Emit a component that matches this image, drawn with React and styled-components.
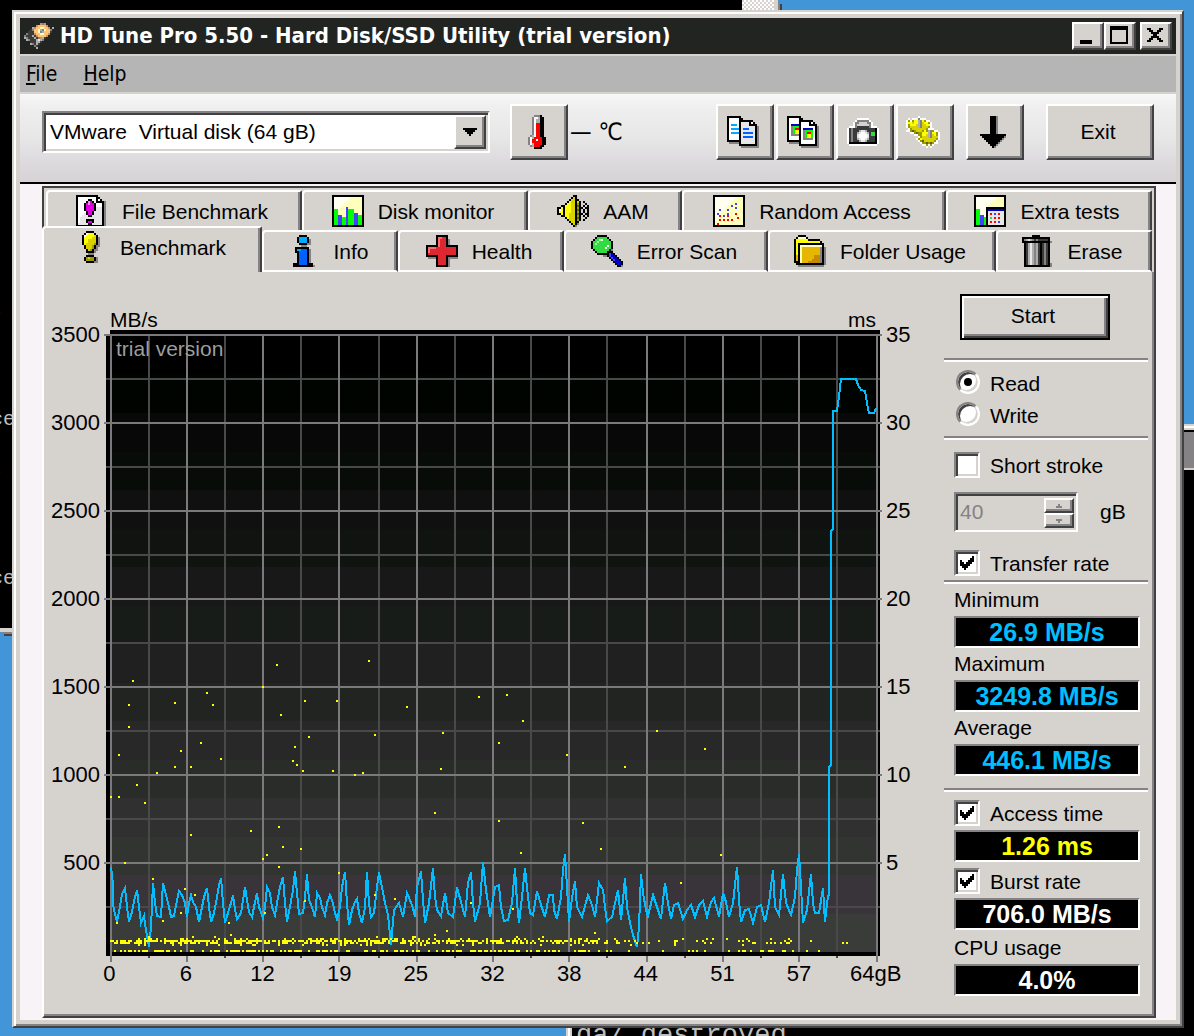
import styled, { createGlobalStyle, css } from "styled-components";

const GlobalStyle = createGlobalStyle`
  * {
    box-sizing: border-box;
  }
  body {
    margin: 0;
    background-color: #4295d6;
    color: #000;
    font-family: "Liberation Sans", Arial, sans-serif;
    font-size: 21px;
    line-height: 24px;
  }
  button, input, select, output {
    font: inherit;
    color: inherit;
  }
`;

const face = "#d6d3ce";
const shade = "#848284";
const dark = "#424142";

const raised = css`
  background-color: ${face};
  border: 2px solid;
  border-color: #fff ${dark} ${dark} #fff;
  box-shadow: inset -2px -2px ${shade};
`;

const sunken = css`
  border: 2px solid;
  border-color: ${shade} #fff #fff ${shade};
  box-shadow: inset 2px 2px ${dark}, inset -2px -2px ${face};
`;

/* ---------- desktop ---------- */

const Desktop = styled.div`
  display: flex;
  min-height: 100vh;
  overflow: hidden;
  padding: 10px 10px 8px 12px;
  position: relative;
`;

const TopConsole = styled.div`
  background-color: #000;
  border: solid ${face};
  border-width: 0 4px 4px 0;
  box-shadow: 2px 2px ${shade}, 4px 4px ${dark};
  height: 632px;
  left: 0;
  overflow: hidden;
  position: absolute;
  top: 0;
  width: 778px;
`;

const ConsoleScroll = styled.div`
  background: repeating-conic-gradient(#fff 0% 25%, ${face} 0% 50%) 0 0 / 4px 4px;
  height: 100%;
  margin-left: auto;
  width: 32px;
`;

const ConsoleText = styled.span`
  color: ${(props) => props.color || "#bdbebd"};
  font-family: "Liberation Mono", monospace;
  font-size: 20px;
  left: -9px;
  position: absolute;
  top: ${(props) => props.top}px;
`;

const SideConsole = styled.div`
  background-color: #000;
  border: 2px solid ${face};
  bottom: 0;
  box-shadow: inset 2px 2px #fff, inset 4px 4px ${face};
  left: 566px;
  overflow: hidden;
  padding: 6px 0 0 6px;
  position: absolute;
  right: -40px;
  top: 424px;
  border-bottom: none;
`;

const SideConsoleTitle = styled.div`
  background-color: ${shade};
  border-bottom: 2px solid ${face};
  height: 38px;
`;

const SideConsoleText = styled.span`
  bottom: -16px;
  color: #bdbebd;
  font-family: "Liberation Mono", monospace;
  font-size: 27px;
  left: 8px;
  line-height: 32px;
  position: absolute;
  white-space: pre;
`;

/* ---------- window ---------- */

const Window = styled.main`
  background-color: ${face};
  border: 2px solid;
  border-color: ${face} ${dark} ${dark} ${face};
  box-shadow: inset 2px 2px #fff, inset -2px -2px ${shade};
  display: flex;
  flex: 1;
  flex-direction: column;
  min-width: 0;
  padding: 6px;
  position: relative;
`;

const TitleBar = styled.header`
  align-items: center;
  background-color: #212421;
  display: flex;
  height: 36px;
  padding: 0 4px;
`;

const Title = styled.h1`
  color: #fff;
  flex: 1;
  font-family: "DejaVu Sans Condensed", "DejaVu Sans", sans-serif;
  font-size: 22px;
  font-weight: bold;
  margin: 0 0 0 6px;
  white-space: nowrap;
`;

const CaptionButton = styled.button`
  ${raised}
  align-items: center;
  display: flex;
  height: 28px;
  justify-content: center;
  margin-left: ${(props) => (props.$apart ? 4 : 0)}px;
  padding: 0 2px 2px 0;
  width: 32px;
`;

const MenuBar = styled.nav`
  align-items: center;
  background-color: #b5b5b5;
  border: solid ${face};
  border-width: 2px 0;
  display: flex;
  gap: 26px;
  height: 40px;
  padding: 0 6px;
`;

const MenuItem = styled.a`
  color: #000;
  font-family: "DejaVu Sans Condensed", "DejaVu Sans", sans-serif;
  text-decoration: none;
`;

const Toolbar = styled.div`
  align-items: center;
  background: linear-gradient(#f7f7f7, #efefef 15%, #e7e7e7 50%, #dedbde 75%, #d6d3d6);
  border-bottom: 2px solid #000;
  display: flex;
  gap: 2px;
  height: 90px;
  padding: 2px 22px 14px;
`;

const DriveBox = styled.div`
  ${sunken}
  background-color: #fff;
  display: flex;
  flex: 0 1 448px;
  height: 42px;
  margin-right: 18px;
  min-width: 0;
  padding: 2px;
`;

const DriveSelect = styled.select`
  appearance: none;
  background: transparent;
  border: none;
  flex: 1;
  margin-right: -32px;
  min-width: 0;
  outline: none;
  padding: 0 36px 0 4px;
  z-index: 1;
`;

const DriveArrow = styled.span`
  ${raised}
  align-items: center;
  display: flex;
  justify-content: center;
  width: 32px;
`;

const ToolButton = styled.button`
  ${raised}
  align-items: center;
  display: flex;
  flex: none;
  height: 56px;
  justify-content: center;
  margin-left: ${(props) => props.$before || 0}px;
  padding: 0 4px 0 0;
  width: ${(props) => (props.$wide ? 108 : 58)}px;
`;

const Temperature = styled.span`
  flex: 1;
  font-family: "DejaVu Sans Condensed", "DejaVu Sans", sans-serif;
  font-size: 24px;
`;

/* ---------- tabs ---------- */

const Content = styled.div`
  background-color: #f7f3f7;
  display: flex;
  flex: 1;
  flex-direction: column;
  padding: 2px 20px 2px 22px;
`;

const TabStrip = styled.div`
  background-color: ${face};
  border: solid ${dark};
  border-width: 2px 2px 0;
  padding: 2px 2px 0;
`;

const TabRow = styled.div`
  display: flex;
  height: ${(props) => (props.$front ? 42 : 40)}px;
  margin-left: ${(props) => (props.$front ? -4 : 0)}px;
`;

const TabButton = styled.button`
  align-items: center;
  background-color: ${face};
  border: 2px solid #fff;
  border-bottom-width: ${(props) => (props.$front && !props.$active ? 2 : 0)}px;
  border-right-color: ${dark};
  border-radius: 4px 2px 0 0;
  box-shadow: inset -2px 0 ${shade};
  display: flex;
  flex: 1 1 ${(props) => props.$width}px;
  gap: 14px;
  justify-content: center;
  margin-top: ${(props) => (props.$active ? -4 : 0)}px;
  min-width: 0;
  padding: ${(props) => (props.$active ? "0 4px 6px 0" : "0 4px 0 0")};
  white-space: nowrap;
`;

const TabLabel = styled.span`
  padding-top: 2px;
`;

const Page = styled.section`
  background-color: ${face};
  border: 2px solid;
  border-color: transparent ${dark} ${dark} #fff;
  border-top: none;
  box-shadow: inset -2px -2px ${shade};
  display: flex;
  flex: 1;
  padding: 0 2px 2px 0;
`;

/* ---------- chart ---------- */

const ChartArea = styled.div`
  align-content: start;
  display: grid;
  flex: 1;
  font-size: 22px;
  grid-template-columns: 60px 1fr 62px;
  grid-template-rows: 58px 632px auto;
  min-width: 0;
`;

const ChartHead = styled.div`
  align-items: flex-end;
  display: flex;
  font-size: 21px;
  grid-column: 2;
  justify-content: space-between;
  line-height: 20px;
  padding: 0 6px;
`;

const YAxis = styled.div`
  grid-column: ${(props) => (props.$right ? 3 : 1)};
  grid-row: 1 / 3;
  padding: 19px 4px 0;
  text-align: ${(props) => (props.$right ? "left" : "right")};
`;

const YLabel = styled.div`
  height: 88px;
  line-height: 88px;
`;

const PlotBox = styled.div`
  grid-column: 2;
  grid-row: 2;
  position: relative;
`;

const PlotSvg = styled.svg`
  display: block;
  height: 632px;
  width: 100%;
`;

const Watermark = styled.span`
  color: #9c9e9c;
  font-size: 21px;
  left: 12px;
  position: absolute;
  top: 7px;
`;

const XAxis = styled.div`
  display: grid;
  grid-column: 1 / 4;
  grid-template-columns: repeat(11, 1fr);
  margin: 0 30px 0 27px;
  text-align: center;
`;

/* ---------- side panel ---------- */

const Side = styled.form`
  flex: none;
  padding: 22px 4px 0 0;
  width: 208px;
`;

const StartButton = styled.button`
  background-color: ${face};
  border: 2px solid #000;
  box-shadow: inset 2px 2px #fff, inset -2px -2px ${dark}, inset -4px -4px ${shade};
  display: block;
  height: 46px;
  margin: 0 0 18px 16px;
  padding: 0 4px 2px 0;
  width: 150px;
`;

const Rule = styled.hr`
  background-color: ${shade};
  border: none;
  border-bottom: 2px solid #fff;
  height: 4px;
  margin: 0;
`;

const Options = styled.div`
  display: flex;
  flex-direction: column;
  gap: ${(props) => props.$gap}px;
  padding: ${(props) => props.$pad};
`;

const Option = styled.label`
  display: flex;
  gap: 10px;
  height: ${(props) => (props.$small ? 24 : 26)}px;
  line-height: 28px;
`;

const Check = styled.input`
  ${sunken}
  appearance: none;
  background-color: #fff;
  display: grid;
  height: 26px;
  margin: 0;
  place-content: center;
  width: 26px;

  &:checked::before {
    background-color: #000;
    clip-path: polygon(
      0 4px, 2px 4px, 2px 6px, 4px 6px, 4px 8px, 6px 8px, 6px 6px, 8px 6px, 8px 4px,
      10px 4px, 10px 2px, 12px 2px, 12px 0, 14px 0, 14px 6px, 12px 6px, 12px 8px,
      10px 8px, 10px 10px, 8px 10px, 8px 12px, 6px 12px, 6px 14px, 4px 14px,
      4px 12px, 2px 12px, 2px 10px, 0 10px
    );
    content: "";
    height: 14px;
    width: 14px;
  }
`;

const Radio = styled.input`
  appearance: none;
  background-color: #fff;
  border: 2px solid;
  border-color: ${shade} #fff #fff ${shade};
  border-radius: 50%;
  box-shadow: inset 2px 2px ${dark}, inset -2px -2px ${face};
  display: grid;
  height: 24px;
  margin: 0 0 0 2px;
  place-content: center;
  width: 24px;

  &:checked::before {
    background-color: #000;
    border-radius: 50%;
    content: "";
    height: 8px;
    width: 8px;
  }
`;

const StrokeRow = styled.div`
  align-items: center;
  display: flex;
  gap: 22px;
`;

const Spinner = styled.div`
  ${sunken}
  display: flex;
  height: 40px;
  padding: 2px;
  width: 124px;
`;

const SpinnerInput = styled.input`
  appearance: textfield;
  background: transparent;
  border: none;
  color: ${shade};
  flex: 1;
  min-width: 0;
  padding: 0 2px;

  &::-webkit-inner-spin-button {
    display: none;
  }
`;

const SpinnerButtons = styled.div`
  display: flex;
  flex-direction: column;
  padding-top: 2px;
  width: 30px;
`;

const SpinnerButton = styled.button`
  ${raised}
  align-items: center;
  display: flex;
  flex: 1;
  justify-content: center;
  padding: 0;
`;

const Readouts = styled.div`
  display: flex;
  flex-direction: column;
  padding: ${(props) => props.$pad};
`;

const ReadoutLabel = styled.label`
  line-height: 32px;
`;

const Readout = styled.output`
  background-color: #000;
  border: 2px solid;
  border-color: ${shade} #fff #fff ${shade};
  color: ${(props) => props.color};
  font-size: 25px;
  font-weight: bold;
  height: 32px;
  line-height: 28px;
  text-align: center;
`;

/* ---------- pixel icons ---------- */

const palette = {
  K: "#000000",
  W: "#ffffff",
  L: "#e7e7e7",
  S: "#848284",
  D: "#393c39",
  T: "#adaead",
  M: "#de00de",
  m: "#ff84ff",
  Y: "#ffff00",
  y: "#d6d300",
  O: "#9c9a00",
  o: "#636100",
  g: "#00ff00",
  V: "#31db42",
  v: "#9cff9c",
  B: "#4241ff",
  b: "#0000c6",
  C: "#00aaff",
  N: "#0061ff",
  R: "#ff0000",
  r: "#de2831",
  E: "#ff6d6b",
  F: "#ffffbd",
  f: "#fffff0",
  q: "#e7b600",
  Q: "#c68a00",
  P: "#ffc373",
  p: "#c68e63",
};

const rep = (row, n) => Array(n).fill(row);

const icons = {
  page: [
    "KKKKKKKKKKK.....",
    "KWWWWWWWWWKK....",
    "KWWWWWKKWWKWK...",
    "KWWWWKmMKWKKKKS.",
    "KWWWKMmMMKWWWKS.",
    "KWWWKMMMMKWWWKS.",
    "KWWWKMMMMKLLLKS.",
    "KWWWKMMMMKLLLKS.",
    "KWWWWKMMKLLLLKS.",
    "KWWWLKMMKLLLLKS.",
    "KWWLLLKKLLLLLKS.",
    "KWLLLLLLLLLLLKS.",
    "KWLLLKKKKLLLLKS.",
    "KWLLLKMMKLLLLKS.",
    "KLLLLLKKLLLLLKS.",
    "KKKKKKKKKKKKKKS.",
  ],
  bars: [
    "KKKKKKKKKKKKKKKK",
    "KffffffffFFFFFFK",
    "KfffffffFFFFFFFK",
    "KffffffFFFFFFFFK",
    "KfffffFFFFFFFFFK",
    "KffffFFFFFFFFFFK",
    "KfffFFFBFFFFFFFK",
    "KggFFFFBgggFFFFK",
    "KggFFFFBgggFFFFK",
    "KggFFFFBgggBBFFK",
    "KggBBFFBgggBBggK",
    ...rep("KggBBggBgggBBggK", 4),
    "KKKKKKKKKKKKKKKK",
  ],
  speaker: [
    "........KK......",
    ".......KyK......",
    "......KyyKK.....",
    ".....KYyyKyK.K..",
    "....KYYyyKOK..K.",
    "..KKYYYyyKoK.K.K",
    "KKYKYYYyyKOKK.KK",
    "KWYKYYYyyKoK.K.K",
    "KYYKYYYyyKOK.K.K",
    "KKYKYYyyyKoKK.KK",
    "..KKYYyyyKOK.K.K",
    "....KYyyyKoK..K.",
    ".....KyyyKOK.K..",
    "......KyyKK.....",
    ".......KyKS.....",
    "........KS......",
  ],
  scatter: [
    "KKKKKKKKKKKKKKKK",
    "KffffffffffFFFFK",
    "KfffffffffFFFFFK",
    "KffffffffFFFFFFK",
    "KfffffffFFFBFFFK",
    "KffffffFFBFFFFFK",
    "KfffffFFFFFBFFFK",
    "KffBfFFBFFFFFFFK",
    "KfffFFFFFFFFFFFK",
    "KfBFFFFBFFFRFFFK",
    "KffRFBFRFFFFFFFK",
    "KfFFFFFFFFFFRFFK",
    "KfFRFRFRFRFFFFFK",
    "KFFFFFFFFFFFFFFK",
    "KFRFFFFFFFFFFFFK",
    "KKKKKKKKKKKKKKKK",
  ],
  extra: [
    "KKKKKKKKKKKKKKKK",
    "KffffffffffFFFFK",
    "KfffffffffFFFFFK",
    "KffffffffFFFFFFK",
    "KfffffffFFFFFFFK",
    "KffffffFFFFFFFFK",
    "KfffffKKKKKKKKKK",
    "KggfffKbbbbbbbbK",
    "KggfffKLLLLLLLLK",
    "KggfffKLRLBLRLLK",
    "KggBBfKLLLLLLLLK",
    "KggBBgKLVLRLRLLK",
    "KggBBgKLLLLLLLLK",
    "KggBBgKLRLRLBLLK",
    "KggBBgKLLLLLLLLK",
    "KKKKKKKKKKKKKKKK",
  ],
  exclaim: [
    "......KKKK......",
    ".....KWYYYK.....",
    "....KWYYYYyK....",
    "....KYYYYyyKS...",
    "....KYYyyyyKS...",
    "....KYYyyyyKS...",
    "....KYyyyyOKS...",
    ".....KyyyOKSS...",
    ".....KyyyOKS....",
    "......KyOKSS....",
    "......KKKKS.....",
    ".......SSS......",
    "......KKKK......",
    ".....KOyOOKS....",
    ".....KOOOOKS....",
    "......KKKKSS....",
  ],
  info: [
    "......KKKK......",
    ".....KCCCCK.....",
    ".....KCCCCKS....",
    ".....KCCCCKS....",
    "......KKKKSS....",
    ".......SSS......",
    "....KKKKKKK.....",
    "....KCCNNNKS....",
    "....KKNNNNKS....",
    ...rep(".....KNNNNKS....", 5),
    "...KKKNNNNKKK...",
    "...KKKKKKKKKKS..",
  ],
  cross: [
    ".....KKKKKK.....",
    ".....KEErrK.....",
    ".....KErrrKS....",
    ".....KErrrKS....",
    ".....KErrrKS....",
    "KKKKKKErrrKKKKKK",
    "KEEEErrrrrrrrrrK",
    "KErrrrrrrrrrrrrK",
    "KErrrrrrrrrrrrrK",
    "KrrrrrrrrrrrrrrK",
    "KKKKKKrrrrKKKKKK",
    ".SSSSKrrrrKSSSSS",
    ".....KrrrrKS....",
    ".....KrrrrKS....",
    ".....KrrrrKS....",
    ".....KKKKKKS....",
  ],
  lens: [
    "...KKKKK........",
    "..KVVVVVK.......",
    ".KVVvWVVVK......",
    "KVVvVVVVVVK.....",
    "KVvVVVVVVVK.....",
    "KVVVVVVVWVK.....",
    "KVVVVVVWVVK.....",
    ".KVVVVVVVKS.....",
    "..KVVVVVKKK.....",
    "...KKKKKKBbK....",
    "......SSKBbbK...",
    ".........KBbbK..",
    "..........KBbbK.",
    "...........KbbbK",
    "............KbbK",
    ".............KKS",
  ],
  folder: [
    "..KKKK..........",
    ".KFFFFK.........",
    "KYYYYYYKKKKKK...",
    "KYYYYYYYYYYYYK..",
    "KYKKKKKKKKKKKKK.",
    "KYKFFFFFFFFFFFK.",
    ...rep("KYKFqqqqqqqqqSKS", 4),
    ...rep("KqKFqqqqqqQQQSKS", 2),
    "KqKFqqqqqQQQQSKS",
    "KKKFqqqQQQQQQSKS",
    ".KKKKKKKKKKKKKKS",
    "..SSSSSSSSSSSSS.",
  ],
  trash: [
    ".....KKKK.......",
    "KKKKKKKKKKKKKK..",
    "KSTLTSDSDDDDDK..",
    "KKKKKKKKKKKKKKS.",
    ...rep(".KDTLTSTDKDSDK..", 10),
    ".KDTLTSTDKDSDKS.",
    ".KKKKKKKKKKKKKS.",
  ],
  thermometer: [
    "...SSSK..",
    "..SWWTKK.",
    "..SWTTKK.",
    "..SWTTKK.",
    ...rep("..SWRRKK.", 6),
    ".STWRRKK.",
    "SWTRRRRKK",
    "SWRRWRRKK",
    "SWRRRRRKK",
    "SWTRRRRKK",
    ".STRRRKK.",
    "...KKKK..",
  ],
  copyText: [
    "KKKKKKK.........",
    "KWWWWWKK........",
    "KWWWWWKKKKKKK...",
    "KWWWWWKLLLLKWK..",
    "KWCCCWKLLLLKKKK.",
    "KWWWWWKLLLLLLLKS",
    "KWCCCCKLNNNLLLKS",
    "KWWWWWKLLLLLLLKS",
    "KWCCCCKLNNNNNLKS",
    "KWWWWWKLLLLLLLKS",
    "KWWWWWKLNNNNNLKS",
    "KWWWWWKLLLLLLLKS",
    "KKKKKKKLLLLLLLKS",
    ".SSSSSKLLLLLLLKS",
    "......KKKKKKKKKS",
    ".......SSSSSSSSS",
  ],
  copyImage: [
    "KKKKKKK.........",
    "KWWWWWKK........",
    "KWWWWWKKKKKKK...",
    "KWWWWWKWWWWKWK..",
    "KWbbbbKWWWWKKKK.",
    "KWSgggKWWWWWWWKS",
    "KWSgRRKWbbbbbWKS",
    "KWSgYYKWSggggWKS",
    "KWSgYYKWSgRRgWKS",
    "KWSSSSKWSgYYgWKS",
    "KWWWWWKWSgYYgWKS",
    "KWWWWWKWSSSSSWKS",
    "KKKKKKKWWWWWWWKS",
    ".SSSSSKWWWWWWWKS",
    "......KKKKKKKKKS",
    ".......SSSSSSSSS",
  ],
  camera: [
    ".....WWWWWW.....",
    "....WSSSSSSW....",
    "...WSS....SSW...",
    "...WS......SW...",
    ".WWWSDDDDDDSWWW.",
    "WDSDDDDDDDDDDDKW",
    "WDSDDDTLLTDDDDKW",
    "WDSDDTLWWLTDVVKW",
    "WDSDDLWWWWLDVVKW",
    "WDSDDLWWWWLDDDKW",
    "WDSDDTLWWLTDDDKW",
    "WDSDDDTLLTDDDDKW",
    "WKKKKKKKKKKKKKKW",
    ".WWWWWWWWWWWWWW.",
  ],
  gears: [
    "......W..........",
    ".W.WWWSWWW.......",
    "WOWOYYTSYOWW.....",
    "WYYyYYTSyYYOW....",
    "WOYYYyTSyyYYW....",
    "WOyyyyTSyyyOW....",
    ".WOyyyyyyyOWWW...",
    "WWOoOyyyOYOTSOWW.",
    "..WWOoOOYYYTSYYOW",
    "....WWOOYYyTSyYOW",
    "......WOyyyTSyyyW",
    ".....WOYyyyyyyyOW",
    "......WOoyyyyyOW.",
    ".......WOOoOoOWW.",
    "........WWOWOW...",
    "..........W.W....",
  ],
  down: [
    ...rep(".....KKKS....", 9),
    "KKKKKKKKKKKKK",
    ".KKKKKKKKKKKS",
    "..KKKKKKKKKS.",
    "...KKKKKKKS..",
    "....KKKKKS...",
    ".....KKKS....",
    "......KS.....",
  ],
  drive: [
    "........pSp....",
    "......pPPPPp...",
    "....TpPPFFPPp.T",
    "...DSPPFTSFPPS.",
    "..DDDPPFSTPPPD.",
    ".SDDDpPPFFPPp..",
    "SDDDTDpPPPPp...",
    "TSDDDTDSpTD....",
    ".TSDDDTLTS.....",
    "...DDDTTD......",
    "...TSDTD.......",
    ".....SD........",
    "......T........",
  ],
  minimize: [
    ".......",
    ".......",
    ".......",
    ".......",
    ".......",
    ".......",
    ".......",
    "KKKKKK.",
    "KKKKKK.",
  ],
  maximize: [
    "KKKKKKKKK",
    "KKKKKKKKK",
    ...rep("K.......K", 6),
    "KKKKKKKKK",
  ],
  close: [
    "KK....KK",
    ".KK..KK.",
    "..KKKK..",
    "...KK...",
    "..KKKK..",
    ".KK..KK.",
    "KK....KK",
  ],
  dropdown: ["KKKKKKK", ".KKKKK.", "..KKK..", "...K..."],
  spinUp: ["..S..", ".SSS."],
  spinDown: [".SSS.", "..S.."],
};

const PixelIcon = ({ name }) => {
  const rows = icons[name];
  const width = rows[0].length;
  return (
    <svg
      width={width * 2}
      height={rows.length * 2}
      viewBox={`0 0 ${width} ${rows.length}`}
      shapeRendering="crispEdges"
      overflow="visible"
      aria-hidden="true"
    >
      {rows.map((row, y) =>
        [...row].map((c, x) =>
          palette[c] ? (
            <rect key={`${x}-${y}`} x={x} y={y} width="1" height="1" fill={palette[c]} />
          ) : null
        )
      )}
    </svg>
  );
};

/* ---------- chart data ---------- */

const bands = [
  "#000000", "#000400", "#080808", "#080c08", "#101010", "#101410", "#181818", "#181c18",
  "#212021", "#212421", "#292829", "#292c29", "#313031", "#313431", "#393439", "#393c39",
];

const majorX = [111, 187, 263, 339, 417, 493, 569, 647, 723, 799, 877];
const minorX = [149, 225, 301, 379, 455, 531, 607, 685, 761, 837];
const majorY = [335, 423, 511, 599, 687, 775, 863];
const minorY = [379, 467, 555, 643, 731, 819, 907];

const transferRate = `
111,867 113,884 113,904 115,914 117,922 120,906 122,894 125,888 127,907 129,922 132,912 134,901
137,890 139,907 141,923 144,916 146,930 149,947 151,927 153,883 155,903 157,916 161,917 163,883
166,895 169,907 171,917 174,916 177,900 179,891 182,895 185,903 187,917 189,903 191,895 193,902
196,907 199,922 202,907 204,897 207,888 209,907 211,922 214,913 217,897 219,885 221,878 223,903
225,923 228,913 231,903 233,895 235,910 237,919 241,913 243,900 245,887 247,900 249,912 252,917
255,902 257,893 259,907 263,918 265,907 267,887 270,893 272,907 275,915 277,903 280,887 283,877
285,903 287,922 290,907 293,890 295,871 297,893 299,914 303,913 305,897 307,874 309,900 312,907
315,917 317,893 320,898 322,907 325,915 327,903 330,895 333,903 335,913 337,919 340,907 342,887
345,872 347,903 349,925 352,910 355,902 357,899 359,913 362,923 365,907 367,872 369,903 371,917
374,913 377,887 379,872 382,887 385,903 388,915 391,945 394,910 399,903 403,917 407,893 412,905
415,917 417,887 421,871 423,900 425,923 429,903 433,868 435,897 437,910 441,916 445,893 448,913
453,917 457,887 461,902 465,917 468,883 471,872 473,903 475,922 480,903 483,862 486,890 490,917
495,887 499,885 501,907 504,921 508,920 512,903 515,868 517,903 519,923 522,897 525,868 528,897
530,913 533,915 537,891 541,905 545,917 549,895 553,895 554,910 557,919 561,897 563,870 565,854
567,887 569,922 572,898 575,881 577,907 582,917 588,895 592,905 595,917 599,883 603,890 605,907
607,921 612,917 615,903 618,890 621,920 625,878 627,907 630,923 633,935 637,947 639,927 641,874
643,893 646,910 648,916 653,895 657,907 661,919 665,883 668,903 671,919 674,905 678,903 683,919
687,910 691,905 695,917 699,905 703,901 707,917 711,902 714,898 719,917 723,893 726,902 729,917
733,903 737,867 739,900 741,922 745,910 749,909 753,923 757,907 761,905 765,922 769,903 773,870
775,907 779,915 783,874 786,903 791,915 795,897 797,870 799,854 801,887 803,923 807,910 811,874
813,903 815,913 819,913 823,888 825,922 827,903 829,893 829,767 831,765 831,531 833,529 833,411
837,411 839,397 841,379 856,379 858,385 861,390 865,391 867,403 869,413 874,413 876,408`;

const accessTimes = [
  [133, 681], [129, 705], [129, 727], [119, 755], [157, 773], [175, 703], [175, 767], [181, 751],
  [191, 767], [201, 743], [207, 693], [213, 705], [221, 759], [137, 785], [111, 797], [119, 797],
  [145, 803], [191, 835], [251, 831], [263, 687], [277, 665], [281, 715], [305, 701], [337, 701],
  [309, 737], [295, 747], [293, 761], [297, 765], [303, 771], [333, 771], [355, 775], [363, 773],
  [369, 661], [375, 735], [279, 827], [283, 847], [301, 849], [267, 855], [263, 859], [279, 867],
  [125, 863], [153, 879], [185, 889], [195, 895], [181, 913], [163, 921], [117, 923], [229, 923],
  [231, 935], [265, 913], [305, 901], [339, 873], [375, 895], [395, 899], [407, 707], [479, 697],
  [507, 695], [523, 721], [443, 733], [499, 743], [441, 769], [435, 813], [499, 821], [521, 853],
  [567, 755], [583, 823], [601, 849], [625, 767], [657, 731], [471, 903], [513, 909], [447, 931],
  [595, 933], [435, 935], [705, 749], [721, 855], [681, 883], [843, 943], [847, 943],
];

// most of the seeks land in a thin band right above the axis, thinning out towards the end
const seekBand = () => {
  const dots = [];
  let seed = 7;
  const next = () => {
    seed = (seed * 16807) % 2147483647;
    return seed / 2147483647;
  };
  for (let x = 111; x < 820; x += 2) {
    const fill = x < 520 ? 1 : x < 600 ? 0.75 : x < 650 ? 0.45 : 0.22;
    if (next() < 0.76 * fill) dots.push([x, 941]);
    if (next() < 0.48 * fill) dots.push([x, 943]);
    if (next() < 0.2 * fill) dots.push([x, 939]);
    if (next() < 0.12 * fill) dots.push([x, 945]);
    if (next() < 0.04 * fill) dots.push([x, 937]);
    if (next() < 0.15 + 0.35 * fill) dots.push([x, 951]);
  }
  return dots;
};

const seeks = [...accessTimes, ...seekBand()];

const Plot = () => (
  <PlotSvg
    viewBox="104 330 778 632"
    preserveAspectRatio="none"
    shapeRendering="crispEdges"
    role="img"
    aria-label="Transfer rate and access time"
  >
    <path d="M110 330H880V956H106V334H110Z" fill="#000" />
    {bands.map((color, i) => {
      const y = Math.round(336 + i * 38.5);
      return <rect key={i} x="112" y={y} width="764" height={952 - y} fill={color} />;
    })}
    <g fill="#4a494a">
      {minorX.map((x) => <rect key={x} x={x - 1} y="336" width="2" height="622" />)}
      {minorY.map((y) => <rect key={y} x="106" y={y - 1} width="774" height="2" />)}
    </g>
    <g fill="#7b797b">
      {majorX.map((x) => <rect key={x} x={x - 1} y="334" width="2" height="628" />)}
      {majorY.map((y) => <rect key={y} x="104" y={y - 1} width="778" height="2" />)}
    </g>
    <rect x="112" y="952" width="764" height="4" fill="#000" />
    <polyline points={transferRate} fill="none" stroke="#00beff" strokeWidth="2" />
    <g fill="#ffff00">
      {seeks.map(([x, y], i) => <rect key={i} x={x - 1} y={y - 1} width="2" height="2" />)}
    </g>
  </PlotSvg>
);

/* ---------- tabs data ---------- */

const backTabs = [
  { icon: "page", label: "File Benchmark", width: 256 },
  { icon: "bars", label: "Disk monitor", width: 226 },
  { icon: "speaker", label: "AAM", width: 154 },
  { icon: "scatter", label: "Random Access", width: 264 },
  { icon: "extra", label: "Extra tests", width: 206 },
];

const frontTabs = [
  { icon: "exclaim", label: "Benchmark", width: 220, active: true },
  { icon: "info", label: "Info", width: 136 },
  { icon: "cross", label: "Health", width: 166 },
  { icon: "lens", label: "Error Scan", width: 204 },
  { icon: "folder", label: "Folder Usage", width: 228 },
  { icon: "trash", label: "Erase", width: 156 },
];

const Tabs = ({ tabs, front }) => (
  <TabRow $front={front}>
    {tabs.map((tab) => (
      <TabButton
        key={tab.label}
        type="button"
        role="tab"
        aria-selected={!!tab.active}
        $front={front}
        $active={tab.active}
        $width={tab.width}
      >
        <PixelIcon name={tab.icon} />
        <TabLabel>{tab.label}</TabLabel>
      </TabButton>
    ))}
  </TabRow>
);

const App = () => {
  return (
    <Desktop>
      <GlobalStyle />
      <TopConsole>
        <ConsoleScroll />
        <ConsoleText top={302} color="#c65900">-</ConsoleText>
        <ConsoleText top={408}>ce</ConsoleText>
        <ConsoleText top={461} color="#c65900">-</ConsoleText>
        <ConsoleText top={567}>ce</ConsoleText>
      </TopConsole>
      <SideConsole>
        <SideConsoleTitle />
        <SideConsoleText>da/ destroyed</SideConsoleText>
      </SideConsole>

      <Window>
        <TitleBar>
          <PixelIcon name="drive" />
          <Title>HD Tune Pro 5.50 - Hard Disk/SSD Utility (trial version)</Title>
          <CaptionButton type="button" aria-label="Minimize">
            <PixelIcon name="minimize" />
          </CaptionButton>
          <CaptionButton type="button" aria-label="Maximize">
            <PixelIcon name="maximize" />
          </CaptionButton>
          <CaptionButton type="button" aria-label="Close" $apart>
            <PixelIcon name="close" />
          </CaptionButton>
        </TitleBar>
        <MenuBar>
          <MenuItem href="#file"><u>F</u>ile</MenuItem>
          <MenuItem href="#help"><u>H</u>elp</MenuItem>
        </MenuBar>
        <Toolbar>
          <DriveBox>
            <DriveSelect aria-label="Drive">
              <option>VMware&nbsp;&nbsp;Virtual disk (64 gB)</option>
            </DriveSelect>
            <DriveArrow>
              <PixelIcon name="dropdown" />
            </DriveArrow>
          </DriveBox>
          <ToolButton type="button" aria-label="Temperature">
            <PixelIcon name="thermometer" />
          </ToolButton>
          <Temperature>— ℃</Temperature>
          <ToolButton type="button" aria-label="Copy text">
            <PixelIcon name="copyText" />
          </ToolButton>
          <ToolButton type="button" aria-label="Copy screenshot">
            <PixelIcon name="copyImage" />
          </ToolButton>
          <ToolButton type="button" aria-label="Save screenshot">
            <PixelIcon name="camera" />
          </ToolButton>
          <ToolButton type="button" aria-label="Options">
            <PixelIcon name="gears" />
          </ToolButton>
          <ToolButton type="button" aria-label="Minimize to tray" $before={10}>
            <PixelIcon name="down" />
          </ToolButton>
          <ToolButton type="button" $wide $before={20}>Exit</ToolButton>
        </Toolbar>

        <Content>
          <TabStrip role="tablist">
            <Tabs tabs={backTabs} />
            <Tabs tabs={frontTabs} front />
          </TabStrip>
          <Page>
            <ChartArea>
              <ChartHead>
                <span>MB/s</span>
                <span>ms</span>
              </ChartHead>
              <YAxis>
                {[3500, 3000, 2500, 2000, 1500, 1000, 500].map((v) => (
                  <YLabel key={v}>{v}</YLabel>
                ))}
              </YAxis>
              <PlotBox>
                <Plot />
                <Watermark>trial version</Watermark>
              </PlotBox>
              <YAxis $right>
                {[35, 30, 25, 20, 15, 10, 5].map((v) => (
                  <YLabel key={v}>{v}</YLabel>
                ))}
              </YAxis>
              <XAxis>
                {["0", "6", "12", "19", "25", "32", "38", "44", "51", "57", "64gB"].map((v) => (
                  <span key={v}>{v}</span>
                ))}
              </XAxis>
            </ChartArea>

            <Side>
              <StartButton type="button">Start</StartButton>
              <Rule />
              <Options $gap={8} $pad="8px 10px 10px">
                <Option $small>
                  <Radio type="radio" name="mode" defaultChecked />
                  Read
                </Option>
                <Option $small>
                  <Radio type="radio" name="mode" />
                  Write
                </Option>
              </Options>
              <Rule />
              <Options $gap={14} $pad="12px 0 18px 10px">
                <Option>
                  <Check type="checkbox" />
                  Short stroke
                </Option>
                <StrokeRow>
                  <Spinner>
                    <SpinnerInput id="stroke" type="number" defaultValue={40} disabled />
                    <SpinnerButtons>
                      <SpinnerButton type="button" aria-label="Increase" disabled>
                        <PixelIcon name="spinUp" />
                      </SpinnerButton>
                      <SpinnerButton type="button" aria-label="Decrease" disabled>
                        <PixelIcon name="spinDown" />
                      </SpinnerButton>
                    </SpinnerButtons>
                  </Spinner>
                  <label htmlFor="stroke">gB</label>
                </StrokeRow>
              </Options>
              <Options $pad="0 0 4px 10px">
                <Option>
                  <Check type="checkbox" defaultChecked />
                  Transfer rate
                </Option>
              </Options>
              <Rule />
              <Readouts $pad="0 8px 12px 10px">
                <ReadoutLabel htmlFor="min">Minimum</ReadoutLabel>
                <Readout id="min" color="#00beff">26.9 MB/s</Readout>
                <ReadoutLabel htmlFor="max">Maximum</ReadoutLabel>
                <Readout id="max" color="#00beff">3249.8 MB/s</Readout>
                <ReadoutLabel htmlFor="avg">Average</ReadoutLabel>
                <Readout id="avg" color="#00beff">446.1 MB/s</Readout>
              </Readouts>
              <Rule />
              <Readouts $pad="8px 8px 6px 10px">
                <Option>
                  <Check type="checkbox" defaultChecked />
                  Access time
                </Option>
                <Options $pad="4px 0 0">
                  <Readout color="#ffff00">1.26 ms</Readout>
                </Options>
              </Readouts>
              <Readouts $pad="0 8px 0 10px">
                <Option>
                  <Check type="checkbox" defaultChecked />
                  Burst rate
                </Option>
                <Options $pad="4px 0 2px">
                  <Readout color="#fff">706.0 MB/s</Readout>
                </Options>
                <ReadoutLabel htmlFor="cpu">CPU usage</ReadoutLabel>
                <Readout id="cpu" color="#fff">4.0%</Readout>
              </Readouts>
            </Side>
          </Page>
        </Content>
      </Window>
    </Desktop>
  );
};

export default App;
